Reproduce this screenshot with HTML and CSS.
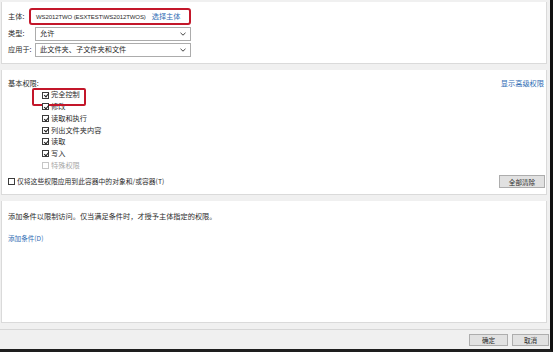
FILE: index.html
```html
<!DOCTYPE html>
<html lang="zh-CN">
<head>
    <meta charset="UTF-8">
    <title>权限项目</title>
    <link rel="stylesheet" href="styles.css">
</head>
<body>
    <div class="frame">
        <div class="panel top-panel">
            <div class="field-row">
                <span class="label short">主体:</span>
                <div class="principal-box">
                    <span class="latin">WS2012TWO (ESXTEST\WS2012TWOS)</span>
                    <a class="link">选择主体</a>
                </div>
            </div>
            <div class="field-row">
                <span class="label">类型:</span>
                <div class="select">
                    <span>允许</span>
                    <svg class="chevron" width="6" height="4" viewBox="0 0 6 4"><path d="M0.5 0.8 3 3.2 5.5 0.8" fill="none" stroke="#444" stroke-width="1"/></svg>
                </div>
            </div>
            <div class="field-row">
                <span class="label">应用于:</span>
                <div class="select">
                    <span>此文件夹、子文件夹和文件</span>
                    <svg class="chevron" width="6" height="4" viewBox="0 0 6 4"><path d="M0.5 0.8 3 3.2 5.5 0.8" fill="none" stroke="#444" stroke-width="1"/></svg>
                </div>
            </div>
        </div>

        <div class="panel perm-panel">
            <div class="perm-head">
                <span>基本权限:</span>
                <a class="link">显示高级权限</a>
            </div>
            <ul class="perm-list">
                <li class="highlight"><span class="box checked"></span>完全控制</li>
                <li><span class="box checked"></span>修改</li>
                <li><span class="box checked"></span>读取和执行</li>
                <li><span class="box checked"></span>列出文件夹内容</li>
                <li><span class="box checked"></span>读取</li>
                <li><span class="box checked"></span>写入</li>
                <li class="disabled"><span class="box"></span>特殊权限</li>
            </ul>
            <div class="perm-foot">
                <label class="inherit"><span class="box"></span>仅将这些权限应用到此容器中的对象和/或容器(T)</label>
                <button class="btn">全部清除</button>
            </div>
        </div>

        <div class="panel cond-panel">
            <p>添加条件以限制访问。仅当满足条件时，才授予主体指定的权限。</p>
            <a class="link">添加条件(D)</a>
        </div>

        <div class="footer">
            <button class="btn wide">确定</button>
            <button class="btn">取消</button>
        </div>
    </div>
</body>
</html>
```

FILE: styles.css
```css
* {
    margin: 0;
    padding: 0;
    box-sizing: border-box;
}

body {
    background: #ffffff;
    font-family: 'Noto Sans CJK SC', 'Liberation Sans', sans-serif;
    font-size: 7.2px;
    color: #2b2b2b;
    line-height: 1;
    white-space: nowrap;
}

.frame {
    width: 553px;
    height: 352px;
    background: #f0f0f0;
    border-right: 3px solid #111;
    border-bottom: 3px solid #1e1e1e;
    padding-top: 2px;
    display: flex;
    flex-direction: column;
}

.panel {
    background: #ffffff;
    margin-right: 3px;
    margin-left: 1px;
    border: 1px solid #dadada;
    border-top: none;
}

.link {
    color: #2f6db4;
}

/* principal / type / apply rows */
.top-panel {
    height: 62px;
    padding: 6px 0 0 6px;
    display: flex;
    flex-direction: column;
}

.field-row {
    display: flex;
    align-items: center;
}

.field-row + .field-row {
    margin-top: 2px;
}

.label {
    width: 27px;
    flex: none;
}

.label.short {
    width: 21px;
}

.principal-box {
    width: 162px;
    height: 17px;
    flex: none;
    border: 2px solid #c3172a;
    border-radius: 3px;
    display: flex;
    align-items: center;
    padding-left: 5px;
    gap: 6px;
}

.latin {
    font-family: 'Liberation Sans', sans-serif;
    font-size: 6px;
    letter-spacing: -0.1px;
}

.select {
    width: 156px;
    height: 14px;
    flex: none;
    border: 1px solid #acacac;
    display: flex;
    align-items: center;
    justify-content: space-between;
    padding: 0 4px 0 4px;
}

/* basic permissions */
.perm-panel {
    margin-top: 6px;
    height: 125px;
    padding: 10px 0 0 6px;
}

.perm-head {
    display: flex;
    justify-content: space-between;
    padding-right: 2px;
}

.perm-list {
    list-style: none;
    padding-left: 34px;
    margin-top: 2px;
}

.perm-list li {
    height: 11.7px;
    display: flex;
    align-items: center;
    gap: 2px;
}

.perm-list li.highlight {
    position: relative;
}

.perm-list li.highlight::before {
    content: '';
    position: absolute;
    left: -10px;
    top: -1px;
    width: 50px;
    height: 13.5px;
    border: 2px solid #c3172a;
    border-radius: 2px;
}

.perm-list li.disabled {
    color: #a8a8a8;
}

.box {
    width: 7px;
    height: 7px;
    border: 1px solid #3c3c3c;
    background: #fff;
    position: relative;
    flex: none;
}

.disabled .box {
    border-color: #c6c6c6;
}

.box.checked::after {
    content: '';
    position: absolute;
    left: 1.6px;
    top: -0.3px;
    width: 2px;
    height: 4px;
    border: solid #1f1f1f;
    border-width: 0 1.3px 1.3px 0;
    transform: rotate(40deg);
}

.perm-foot {
    margin-top: 4px;
    display: flex;
    align-items: center;
    justify-content: space-between;
    padding-right: 1px;
}

.inherit {
    display: flex;
    align-items: center;
    gap: 2px;
    font-size: 6.8px;
}

.btn {
    font-family: inherit;
    font-size: 6.6px;
    color: #2b2b2b;
    height: 13px;
    width: 46px;
    background: #e1e1e1;
    border: 1px solid #adadad;
}

/* conditions */
.cond-panel {
    margin-top: 6px;
    height: 122px;
    padding: 12px 0 0 6px;
}

.cond-panel .link {
    display: block;
    margin-top: 15px;
    font-size: 6.6px;
}

.footer {
    margin-top: 6px;
    flex: 1;
    border-top: 1px solid #d6d6d6;
    display: flex;
    justify-content: flex-end;
    align-items: center;
    gap: 4px;
    padding-right: 1px;
}

.footer .btn {
    width: 37px;
    height: 12px;
}

.footer .btn.wide {
    width: 39px;
}
```
